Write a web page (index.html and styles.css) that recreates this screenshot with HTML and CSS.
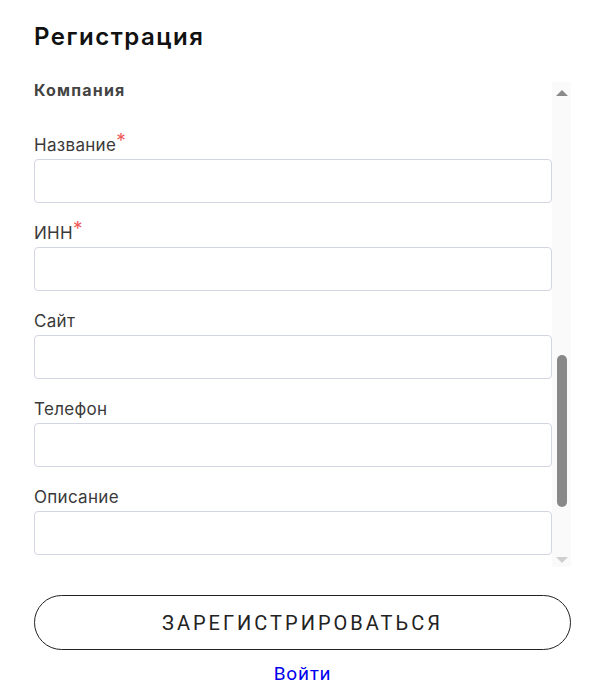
FILE: index.html
```html
<!DOCTYPE html>
<html lang="ru">
<head>
<meta charset="utf-8">
<title>Регистрация</title>
<link rel="stylesheet" href="styles.css">
</head>
<body>
<main class="page">
  <h1 class="title">Регистрация</h1>
  <form class="form">
    <div class="panel">
      <div class="panel-content">
        <h2 class="section-title">Компания</h2>
        <label class="field"><span class="label">Название<span class="req">*</span></span><input class="input" type="text"></label>
        <label class="field"><span class="label">ИНН<span class="req">*</span></span><input class="input" type="text"></label>
        <label class="field"><span class="label">Сайт</span><input class="input" type="text"></label>
        <label class="field"><span class="label">Телефон</span><input class="input" type="tel"></label>
        <label class="field"><span class="label">Описание</span><input class="input" type="text"></label>
      </div>
      <div class="scrollbar" aria-hidden="true">
        <span class="arrow arrow-up"></span>
        <span class="thumb" style="margin-top:259px;height:152px"></span>
        <span class="arrow arrow-down"></span>
      </div>
    </div>
    <button class="submit" type="button">ЗАРЕГИСТРИРОВАТЬСЯ</button>
    <a class="login" href="#">Войти</a>
  </form>
</main>
</body>
</html>
```

FILE: styles.css
```css
* { box-sizing: border-box; }
html, body { margin: 0; padding: 0; background: #fff; }
body { font-family: Inter, "Noto Sans", sans-serif; color: #333; }
.page { padding: 20px 26px 0 34px; }
.title {
  margin: 0;
  font-family: Inter, "Noto Sans", sans-serif;
  font-weight: 600;
  font-size: 24px;
  line-height: 34px;
  letter-spacing: 1.5px;
  color: #111;
}
.form { display: flex; flex-direction: column; margin-top: 26px; }
.panel {
  display: flex;
  height: 487px;
  overflow: hidden;
}
.panel-content {
  flex: 1;
  display: flex;
  flex-direction: column;
}
.section-title {
  margin: 0 0 35px;
  font-size: 16px;
  line-height: 20px;
  font-weight: 700;
  letter-spacing: 1.2px;
  color: #444;
}
.field { display: flex; flex-direction: column; gap: 4px; margin-bottom: 20px; }
.label { font-size: 17px; line-height: 20px; letter-spacing: 0.3px; color: #3a3a3a; }
.req { color: #f05a5a; font-size: 19px; line-height: 12px; vertical-align: top; }
.input {
  height: 44px;
  border: 1px solid #d2d6e2;
  border-radius: 4px;
  background: #fff;
  font: inherit;
}
.scrollbar {
  width: 19px;
  flex: none;
  margin-top: 2px;
  background: #fafafa;
  display: flex;
  flex-direction: column;
  align-items: center;
  padding: 8px 0 4px;
}
.arrow {
  width: 0;
  height: 0;
  border-left: 6.5px solid transparent;
  border-right: 6.5px solid transparent;
}
.arrow-up { border-bottom: 6px solid #8a8a8a; }
.arrow-down { border-top: 6px solid #cfcfcf; margin-top: auto; }
.thumb {
  width: 10px;
  border-radius: 5px;
  background: #888;
}
.submit {
  margin-top: 28px;
  height: 55px;
  border: 1px solid #222;
  border-radius: 28px;
  background: #fff;
  font-family: Roboto, "Liberation Sans", sans-serif;
  font-size: 20px;
  letter-spacing: 3px;
  color: #222;
}
.login {
  align-self: center;
  margin-top: 14px;
  font-family: Roboto, "Liberation Sans", sans-serif;
  font-size: 19px;
  line-height: 20px;
  letter-spacing: 0.8px;
  color: #0000ee;
  text-decoration: none;
}
```
